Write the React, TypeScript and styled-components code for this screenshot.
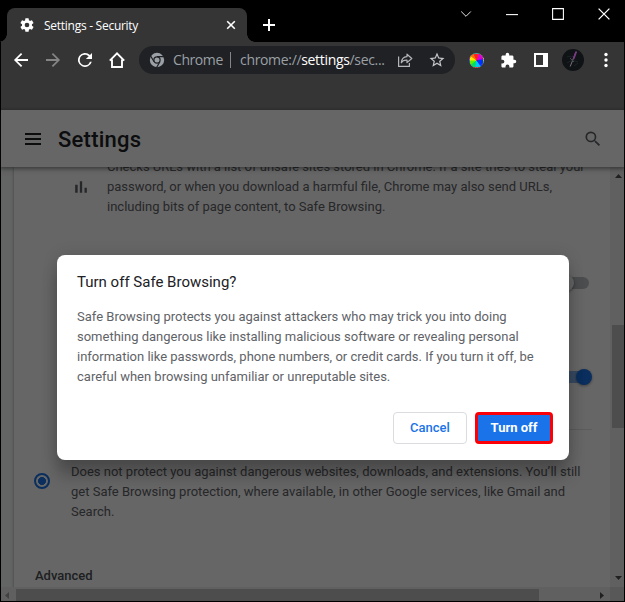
import React from "react";
import styled, { createGlobalStyle } from "styled-components";

const GlobalStyle = createGlobalStyle`
  * { box-sizing: border-box; }
  body { margin: 0; background: #000; overflow: hidden; }
  button { font: inherit; padding: 0; }
  svg { display: block; flex: none; }
`;

const Window = styled.div`
  width: 625px;
  height: 602px;
  padding: 0 1px 1px;
  background: #000;
  display: flex;
  flex-direction: column;
  font-family: Roboto, "Liberation Sans", sans-serif;
`;

const TabStrip = styled.header`
  height: 42px;
  flex: none;
  display: flex;
  align-items: flex-start;
  padding-left: 6px;
`;

const Tab = styled.div`
  position: relative;
  width: 240px;
  height: 34px;
  margin-top: 8px;
  padding: 0 11px 0 12px;
  display: flex;
  align-items: center;
  background: #353535;
  border-radius: 8px 8px 0 0;
  &::before, &::after {
    content: "";
    position: absolute;
    bottom: 0;
    width: 8px;
    height: 8px;
  }
  &::before {
    left: -8px;
    background: radial-gradient(circle at 0 0, transparent 7.5px, #353535 8px);
  }
  &::after {
    right: -8px;
    background: radial-gradient(circle at 100% 0, transparent 7.5px, #353535 8px);
  }
`;

const TabTitle = styled.span`
  flex: 1;
  margin: 1px 0 0 9px;
  color: #fff;
  font: 12px/16px "Open Sans", "Noto Sans", sans-serif;
  letter-spacing: -0.27px;
  white-space: nowrap;
`;

const NewTab = styled.div`
  margin: 18px 0 0 15px;
`;

const Controls = styled.div`
  margin: 8px 14px 0 auto;
  display: flex;
  gap: 34px;
`;

const Toolbar = styled.div`
  height: 68px;
  flex: none;
  display: flex;
  align-items: flex-start;
  padding: 4px 0 0 10px;
  background: #353535;
`;

const NavButtons = styled.div`
  height: 28px;
  display: flex;
  align-items: center;
  gap: 12px;
`;

const AddressBar = styled.div`
  width: 316px;
  height: 28px;
  margin-left: 12px;
  padding: 0 9px 0 10px;
  border-radius: 14px;
  background: #202124;
  display: flex;
  align-items: center;
  color: #9aa0a6;
  font: 14px/20px "Open Sans", "Noto Sans", sans-serif;
  white-space: nowrap;
`;

const SiteName = styled.span`
  width: 49px;
  margin-left: 8px;
  letter-spacing: -0.42px;
`;

const Separator = styled.i`
  width: 1px;
  height: 16px;
  margin: 0 9px 0 8px;
  background: #80868b;
`;

const Url = styled.span`
  width: 145px;
  letter-spacing: -0.33px;
  b { color: #fff; font-weight: 400; }
`;

const AddressIcons = styled.div`
  margin-left: 12px;
  display: flex;
  align-items: center;
  gap: 15px;
`;

const Extensions = styled.div`
  height: 28px;
  margin-left: 14px;
  display: flex;
  align-items: center;
`;

const Wheel = styled.i`
  width: 15px;
  height: 15px;
  border-radius: 50%;
  border: 1px dotted #888;
  background: conic-gradient(#ff2020 20deg, #e000d0 20deg 60deg, #9000ff 75deg, #0030ff 90deg 140deg, #00c8ff 150deg 185deg, #00e060 195deg 230deg, #60f000 240deg 265deg, #ffe800 275deg 300deg, #ff7000 310deg 330deg, #ff2020 340deg);
`;

const Page = styled.main`
  position: relative;
  flex: 1;
  min-height: 0;
  display: flex;
  flex-direction: column;
  background: #fff;
`;

const PageHeader = styled.div`
  position: relative;
  height: 57px;
  flex: none;
  padding: 0 21px 0 24px;
  display: flex;
  align-items: center;
  background: #fff;
  box-shadow: 0 1px 3px 1px rgba(0,0,0,.28), 0 3px 6px rgba(60,64,67,.2);
  z-index: 1;
`;

const PageTitle = styled.h1`
  flex: 1;
  margin: 2px 0 0 17px;
  color: #202124;
  font-size: 22px;
  font-weight: 500;
  line-height: 28px;
  letter-spacing: 0.25px;
`;

const Body = styled.div`
  flex: 1;
  min-height: 0;
  display: grid;
  grid-template: minmax(0, 1fr) 14px / minmax(0, 1fr) 14px;
`;

const Viewport = styled.div`
  padding-left: 13px;
  overflow: hidden;
  background: #f8f9fa;
`;

const Card = styled.section`
  height: 440px;
  background: #fff;
  box-shadow: 0 1px 2px rgba(60,64,67,.3), 0 1px 3px 1px rgba(60,64,67,.15);
  display: flex;
  flex-direction: column;
  padding: 0 18px 0 21px;
`;

const Description = styled.p<{ $width: number }>`
  margin: 0;
  width: ${(p) => p.$width}px;
  color: #5f6368;
  font-size: 13px;
  line-height: 20px;
  white-space: pre;
`;

const Feature = styled.div`
  display: flex;
  gap: 16px;
  margin-top: -10px;
  padding-left: 36px;
  svg { margin-top: 20px; }
`;

const ToggleRow = styled.div<{ $top: number; $end: number }>`
  height: 16px;
  margin: ${(p) => p.$top}px ${(p) => p.$end}px 0 0;
  display: flex;
  justify-content: flex-end;
`;

const Track = styled.div<{ $on?: boolean }>`
  width: 34px;
  height: 12px;
  margin-top: 2px;
  border-radius: 6px;
  display: flex;
  align-items: center;
  justify-content: ${(p) => (p.$on ? "flex-end" : "flex-start")};
  background: ${(p) => (p.$on ? "#8cb9f3" : "#bdc1c6")};
  &::after {
    content: "";
    width: 16px;
    height: 16px;
    flex: none;
    margin: ${(p) => (p.$on ? "0 -3px 0 0" : "0 0 0 3px")};
    border-radius: 50%;
    background: ${(p) => (p.$on ? "#1a73e8" : "#fff")};
    box-shadow: 0 1px 3px rgba(0,0,0,.4);
  }
`;

const Divider = styled.div`
  height: 1px;
  margin: 44px 0 0 36px;
  background: rgba(0,0,0,.1);
`;

const Option = styled.div`
  display: flex;
  align-items: center;
  margin-top: 32px;
  gap: 21px;
`;

const Radio = styled.i`
  width: 16px;
  height: 16px;
  margin: -22px 0 0 -1px;
  border: 2px solid #1a73e8;
  border-radius: 50%;
  background: radial-gradient(circle, #1a73e8 3.7px, transparent 4.3px);
`;

const Subheading = styled.h2`
  margin: 44px 0 0;
  color: #4b4f54;
  font-size: 13px;
  font-weight: 500;
  line-height: 20px;
`;

const VerticalBar = styled.div`
  padding: 7px 0 7px 2px;
  background: #f1f1f1;
  display: flex;
  flex-direction: column;
  justify-content: space-between;
`;

const VerticalThumb = styled.div`
  height: 103px;
  margin: 27px 0 22px;
  background: #c1c1c1;
`;

const HorizontalBar = styled.div`
  padding: 2px 6px 0 4px;
  background: #f1f1f1;
  display: flex;
  align-items: center;
`;

const HorizontalThumb = styled.div`
  width: 523px;
  height: 12px;
  margin: 0 auto 0 7px;
  background: #c1c1c1;
`;

const Corner = styled.div`
  background: #dcdcdc;
`;

const Scrim = styled.div`
  position: absolute;
  inset: 0;
  z-index: 2;
  padding: 145px 0 0 56px;
  background: rgba(0,0,0,.6);
`;

const Dialog = styled.div`
  width: 512px;
  height: 205px;
  padding: 17px 16px 16px 20px;
  display: flex;
  flex-direction: column;
  border-radius: 8px;
  background: #fff;
  box-shadow: 0 0 16px rgba(0,0,0,.12), 0 16px 16px rgba(0,0,0,.24);
`;

const DialogTitle = styled.h2`
  margin: 0 0 15px;
  color: #202124;
  font-size: 15px;
  font-weight: 400;
  line-height: 20px;
`;

const Actions = styled.div`
  margin-top: auto;
  display: flex;
  justify-content: flex-end;
  gap: 8px;
`;

const Button = styled.button<{ $primary?: boolean }>`
  width: ${(p) => (p.$primary ? 78 : 74)}px;
  height: 32px;
  border: ${(p) => (p.$primary ? "3px solid #fb0007" : "1px solid #dadce0")};
  border-radius: 4px;
  background: ${(p) => (p.$primary ? "#1a73e8" : "#fff")};
  color: ${(p) => (p.$primary ? "#fff" : "#1a73e8")};
  font-size: 13px;
  font-weight: ${(p) => (p.$primary ? 700 : 500)};
  line-height: 20px;
`;

type IconProps = { d: string; size?: number; color?: string };
const Icon = ({ d, size = 20, color = "#fff" }: IconProps) => (
  <svg width={size} height={size} viewBox="0 0 24 24" fill={color}>
    <path d={d} />
  </svg>
);

const NavIcon = ({ d, color = "#fff" }: IconProps) => (
  <svg width="20" height="20" viewBox="0.6 0.6 22.8 22.8" fill={color}>
    <path d={d} />
  </svg>
);

const icons = {
  gear: "M19.4 13a7.6 7.6 0 0 0 0-2l2.1-1.65a.5.5 0 0 0 .12-.64l-2-3.46a.5.5 0 0 0-.61-.22l-2.49 1a7.3 7.3 0 0 0-1.69-.98l-.38-2.65A.49.49 0 0 0 14 2h-4a.49.49 0 0 0-.49.42l-.38 2.65c-.61.25-1.17.59-1.69.98l-2.49-1a.5.5 0 0 0-.61.22l-2 3.46a.5.5 0 0 0 .12.64L4.57 11a7.9 7.9 0 0 0 0 2l-2.11 1.65a.5.5 0 0 0-.12.64l2 3.46c.12.22.39.3.61.22l2.49-1c.52.4 1.08.73 1.69.98l.38 2.65c.03.24.24.42.49.42h4c.25 0 .46-.18.49-.42l.38-2.65c.61-.25 1.17-.59 1.69-.98l2.49 1c.23.09.49 0 .61-.22l2-3.46a.5.5 0 0 0-.12-.64L19.4 13zM12 15.5a3.5 3.5 0 1 1 0-7 3.5 3.5 0 0 1 0 7z",
  back: "M20 11H7.83l5.59-5.59L12 4l-8 8 8 8 1.41-1.41L7.83 13H20v-2z",
  forward: "M12 4l-1.41 1.41L16.17 11H4v2h12.17l-5.58 5.59L12 20l8-8z",
  reload: "M17.65 6.35A8 8 0 1 0 19.73 14h-2.08A6 6 0 1 1 12 6c1.66 0 3.14.69 4.22 1.78L13 11h7V4l-2.35 2.35z",
  star: "M22 9.24l-7.19-.62L12 2 9.19 8.63 2 9.24l5.46 4.73L5.82 21 12 17.27 18.18 21l-1.63-7.03L22 9.24zM12 15.4l-3.76 2.27 1-4.28-3.32-2.88 4.38-.38L12 6.1l1.71 4.04 4.38.38-3.32 2.88 1 4.28L12 15.4z",
  puzzle: "M20.5 11H19V7c0-1.1-.9-2-2-2h-4V3.5a2.5 2.5 0 0 0-5 0V5H4c-1.1 0-2 .9-2 2v3.8h1.5a2.7 2.7 0 0 1 0 5.4H2V20c0 1.1.9 2 2 2h3.8v-1.5a2.7 2.7 0 0 1 5.4 0V22H17c1.1 0 2-.9 2-2v-4h1.5a2.5 2.5 0 0 0 0-5z",
  search: "M15.5 14h-.79l-.28-.27A6.5 6.5 0 1 0 13.73 14.43l.27.28v.79l5 4.99L20.49 19l-4.99-5zm-6 0a4.5 4.5 0 1 1 0-9 4.5 4.5 0 0 1 0 9z",
  chart: "M5 9.2h3V19H5V9.2zM10.6 5h2.8v14h-2.8V5zm5.6 8H19v6h-2.8v-6z",
};

const Menu = () => (
  <svg width="16" height="12" viewBox="0 0 16 12" fill="#202124">
    <path d="M0 0h16v2H0ZM0 5h16v2H0ZM0 10h16v2H0Z" />
  </svg>
);

const More = () => (
  <svg width="4" height="16" viewBox="0 0 4 16" fill="#fff">
    <circle cx="2" cy="2.5" r="1.7" />
    <circle cx="2" cy="8" r="1.7" />
    <circle cx="2" cy="13.5" r="1.7" />
  </svg>
);

const Home = () => (
  <svg width="20" height="20" viewBox="0 0 20 20" fill="none" stroke="#fff" strokeWidth="1.9">
    <path d="M2.8 10.7 10 3.4l7.2 7.3M5 9.5V17h10V9.5" />
  </svg>
);

const ChromeLogo = () => (
  <svg width="16" height="16" viewBox="0 0 16 16">
    <circle cx="8" cy="8" r="7.2" fill="#9aa0a6" />
    <circle cx="8" cy="8" r="3.1" fill="#9aa0a6" stroke="#202124" strokeWidth="1.2" />
    <path d="M8 4.6h7M5.1 9.8 1.5 3.7M10.9 9.8 7.4 15.8" stroke="#202124" strokeWidth="1.2" />
  </svg>
);

const Share = () => (
  <svg width="16" height="16" viewBox="0 0 16 16" fill="none" stroke="#b4b7ba" strokeWidth="1.2">
    <path d="M1.6 4.5v9.8h10.8v-3.2" />
    <path d="M10 2.2 14.8 6.5 10 10.6V8.2C7.2 8 5.4 8.8 4.3 10.8 4.5 7.2 6.5 4.9 10 4.6Z" strokeLinejoin="round" />
  </svg>
);

const SidePanel = () => (
  <svg width="14" height="14" viewBox="0 0 14 14">
    <path fill="#fff" fillRule="evenodd" d="M0 0h14v14H0ZM2 2v10h7V2Z" />
  </svg>
);

const Avatar = () => (
  <svg width="22" height="22" viewBox="0 0 22 22">
    <circle cx="11" cy="11" r="11" fill="#101316" />
    <path d="M5 8c3-2 4 1 6-1M5 14l5-3 6 2M12 17l4-3" stroke="#1d2425" fill="none" />
    <path d="M8.2 17.5 14.2 2.5" stroke="#777080" strokeWidth="1" />
    <path d="M11.5 10 14.2 2.8" stroke="#7b3987" strokeWidth="1.8" />
    <path d="m8 9 4 4" stroke="#43494c" />
  </svg>
);

const Arrow = ({ d, w, h, faint }: { d: string; w: number; h: number; faint?: boolean }) => (
  <svg width={w} height={h} viewBox={`0 0 ${w} ${h}`} fill={faint ? "#a3a3a3" : "#505050"}>
    <path d={d} />
  </svg>
);

const ArrowSlot = styled.div`
  display: flex;
  justify-content: center;
  padding-left: 1px;
`;

const ThumbSpace = styled.div`
  flex: 1;
  padding-top: 120px;
`;

const ToolSlot = styled.div<{ $gap: number }>`
  margin-left: ${(p) => p.$gap}px;
`;

export default function App() {
  return (
    <>
      <GlobalStyle />
      <Window>
        <TabStrip>
          <Tab>
            <Icon d={icons.gear} size={16} />
            <TabTitle>Settings - Security</TabTitle>
            <svg width="10" height="10" viewBox="0 0 10 10" stroke="#fff" strokeWidth="1.6">
              <path d="m1.2 1.2 7.6 7.6m0-7.6L1.2 8.8" />
            </svg>
          </Tab>
          <NewTab>
            <svg width="14" height="14" viewBox="0 0 14 14" stroke="#fff" strokeWidth="2">
              <path d="M7 1v12M1 7h12" />
            </svg>
          </NewTab>
          <Controls>
            {["m1.5 3.5 4.8 4.8 4.8-4.8", "M1 6.5h10", "M1.5 1.5h9v9h-9z", "m1.5 1.5 9 9m0-9-9 9"].map((d, i) => (
              <svg key={d} width="12" height="12" viewBox={i === 0 ? "0.8 0 11 12" : "1 1 10 10"} fill="none" stroke="#fff" strokeWidth={i === 3 ? 1.1 : 0.9}>
                <path d={d} />
              </svg>
            ))}
          </Controls>
        </TabStrip>
        <Toolbar>
          <NavButtons>
            <NavIcon d={icons.back} />
            <NavIcon d={icons.forward} color="#858585" />
            <NavIcon d={icons.reload} />
            <Home />
          </NavButtons>
          <AddressBar>
            <ChromeLogo />
            <SiteName>Chrome</SiteName>
            <Separator />
            <Url>chrome://<b>settings</b>/sec...</Url>
            <AddressIcons>
              <Share />
              <Icon d={icons.star} size={18} color="#c4c7ca" />
            </AddressIcons>
          </AddressBar>
          <Extensions>
            <Wheel />
            <ToolSlot $gap={16}><Icon d={icons.puzzle} size={17} /></ToolSlot>
            <ToolSlot $gap={17}><SidePanel /></ToolSlot>
            <ToolSlot $gap={14}><Avatar /></ToolSlot>
            <ToolSlot $gap={20}><More /></ToolSlot>
          </Extensions>
        </Toolbar>
        <Page>
          <PageHeader>
            <Menu />
            <PageTitle>Settings</PageTitle>
            <Icon d={icons.search} size={20} color="#5f6368" />
          </PageHeader>
          <Body>
            <Viewport>
              <Card>
                <Feature>
                  <Icon d={icons.chart} size={20} color="#5f6368" />
                  <Description $width={480}>{"Checks URLs with a list of unsafe sites stored in Chrome. If a site tries to steal your\npassword, or when you download a harmful file, Chrome may also send URLs,\nincluding bits of page content, to Safe Browsing."}</Description>
                </Feature>
                <ToggleRow $top={58} $end={3}><Track /></ToggleRow>
                <ToggleRow $top={78} $end={3}><Track $on /></ToggleRow>
                <Divider />
                <Option>
                  <Radio />
                  <Description $width={515}>{"Does not protect you against dangerous websites, downloads, and extensions. You’ll still\nget Safe Browsing protection, where available, in other Google services, like Gmail and\nSearch."}</Description>
                </Option>
                <Subheading>Advanced</Subheading>
              </Card>
            </Viewport>
            <VerticalBar>
              <ArrowSlot><Arrow d="M0 4 3.5 0 7 4Z" w={7} h={4} /></ArrowSlot>
              <ThumbSpace><VerticalThumb /></ThumbSpace>
              <ArrowSlot><Arrow d="M0 0h7L3.5 4Z" w={7} h={4} /></ArrowSlot>
            </VerticalBar>
            <HorizontalBar>
              <Arrow d="M4 0v7L0 3.5Z" w={4} h={7} faint />
              <HorizontalThumb />
              <Arrow d="m0 0 4 3.5L0 7Z" w={4} h={7} />
            </HorizontalBar>
            <Corner />
          </Body>
          <Scrim>
            <Dialog role="dialog">
              <DialogTitle>Turn off Safe Browsing?</DialogTitle>
              <Description $width={476}>{"Safe Browsing protects you against attackers who may trick you into doing\nsomething dangerous like installing malicious software or revealing personal\ninformation like passwords, phone numbers, or credit cards. If you turn it off, be\ncareful when browsing unfamiliar or unreputable sites."}</Description>
              <Actions>
                <Button>Cancel</Button>
                <Button $primary>Turn off</Button>
              </Actions>
            </Dialog>
          </Scrim>
        </Page>
      </Window>
    </>
  );
}
